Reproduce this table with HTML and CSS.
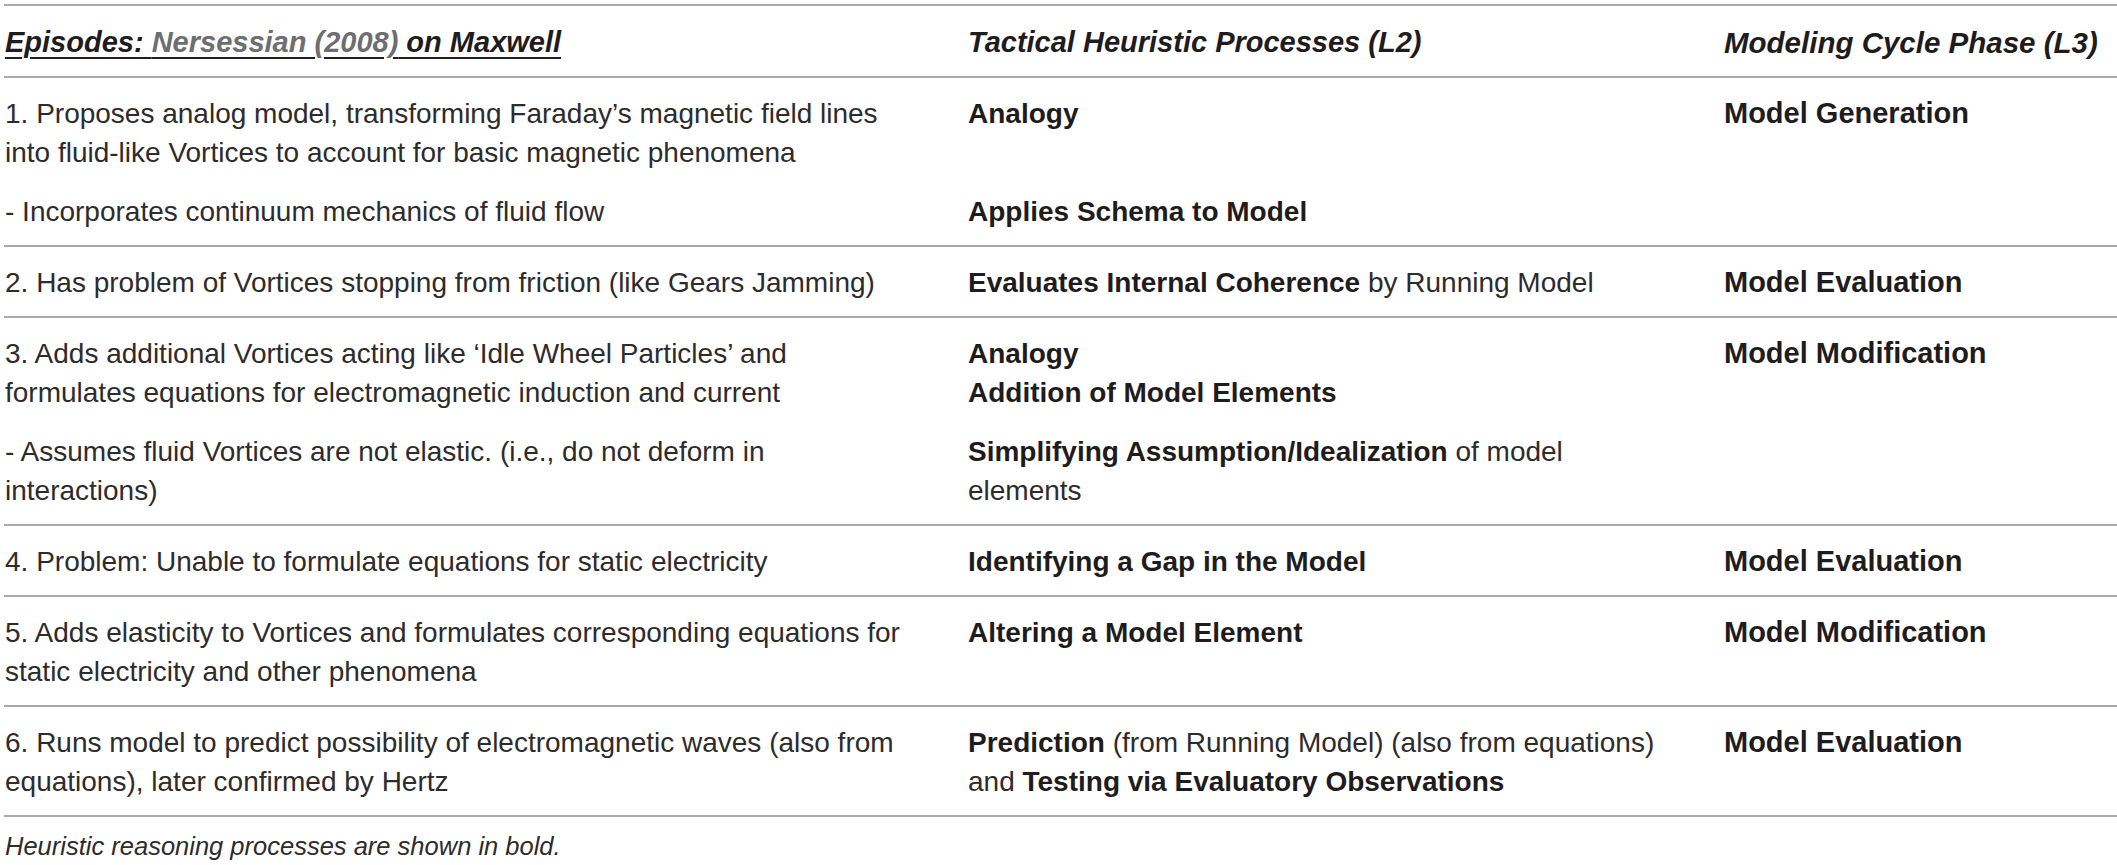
FILE: index.html
```html
<!DOCTYPE html>
<html lang="en">
<head>
<meta charset="utf-8">
<title>Episodes: Nersessian (2008) on Maxwell</title>
<link rel="stylesheet" href="styles.css">
</head>
<body>
<table class="tbl">
  <colgroup>
    <col class="c1">
    <col class="c2">
    <col class="c3">
  </colgroup>
  <thead>
    <tr class="head">
      <th class="h1"><span class="ul">Episodes: <span class="ref">Nersessian (2008)</span> on Maxwell</span></th>
      <th class="h2">Tactical Heuristic Processes (L2)</th>
      <th class="h3">Modeling Cycle Phase (L3)</th>
    </tr>
  </thead>
  <tbody>
    <tr class="open">
      <td>1. Proposes analog model, transforming Faraday’s magnetic field lines into fluid-like Vortices to account for basic magnetic phenomena</td>
      <td><b>Analogy</b></td>
      <td class="phase">Model Generation</td>
    </tr>
    <tr class="cont end">
      <td>- Incorporates continuum mechanics of fluid flow</td>
      <td><b>Applies Schema to Model</b></td>
      <td></td>
    </tr>
    <tr class="end">
      <td>2. Has problem of Vortices stopping from friction (like Gears Jamming)</td>
      <td><b>Evaluates Internal Coherence</b> by Running Model</td>
      <td class="phase">Model Evaluation</td>
    </tr>
    <tr class="open">
      <td>3. Adds additional Vortices acting like ‘Idle Wheel Particles’ and formulates equations for electromagnetic induction and current</td>
      <td><b>Analogy</b><br><b>Addition of Model Elements</b></td>
      <td class="phase">Model Modification</td>
    </tr>
    <tr class="cont end">
      <td>- Assumes fluid Vortices are not elastic. (i.e., do not deform in interactions)</td>
      <td><b>Simplifying Assumption/Idealization</b> of model elements</td>
      <td></td>
    </tr>
    <tr class="end">
      <td>4. Problem: Unable to formulate equations for static electricity</td>
      <td><b>Identifying a Gap in the Model</b></td>
      <td class="phase">Model Evaluation</td>
    </tr>
    <tr class="end">
      <td>5. Adds elasticity to Vortices and formulates corresponding equations for static electricity and other phenomena</td>
      <td><b>Altering a Model Element</b></td>
      <td class="phase">Model Modification</td>
    </tr>
    <tr class="end">
      <td>6. Runs model to predict possibility of electromagnetic waves (also from equations), later confirmed by Hertz</td>
      <td><b>Prediction</b> (from Running Model) (also from equations) and <b>Testing via Evaluatory Observations</b></td>
      <td class="phase">Model Evaluation</td>
    </tr>
  </tbody>
</table>
<p class="note">Heuristic reasoning processes are shown in bold.</p>
</body>
</html>
```

FILE: styles.css
```css
html, body {
  margin: 0;
  padding: 0;
  background: #ffffff;
}

body {
  font-family: "Liberation Sans", Arial, sans-serif;
  color: #2e2b2c;
  font-size: 28px;
  line-height: 39px;
}

.tbl {
  margin: 4px 0 0 4px;
  width: 2113px;
  border-collapse: collapse;
  table-layout: fixed;
  border-top: 2px solid #a7a9ac;
}

.c1 { width: 963px; }
.c2 { width: 756px; }
.c3 { width: auto; }

.tbl th,
.tbl td {
  text-align: left;
  vertical-align: top;
  padding: 16px 0 14px 1px;
  font-weight: 400;
}

.tbl td:nth-child(1) { padding-right: 56px; }
.tbl td:nth-child(2) { padding-right: 44px; }

.head th {
  border-bottom: 2px solid #a7a9ac;
  font-style: italic;
  font-weight: 700;
  font-size: 29px;
  color: #1f1c1d;
  padding-top: 17px;
}

.head th.h3 {
  font-size: 29.5px;
}

.ul {
  text-decoration: underline;
  text-decoration-color: #231f20;
  text-decoration-thickness: 2px;
  text-underline-offset: 5px;
}

.ref {
  color: #6d6e71;
}

.tbl b {
  font-weight: 700;
  color: #1f1c1d;
}

.tbl td.phase {
  font-weight: 700;
  font-size: 29px;
  color: #1f1c1d;
}

tr.open td {
  padding-bottom: 0;
}

tr.cont td {
  padding-top: 20px;
}

tr.end td {
  border-bottom: 2px solid #a7a9ac;
}

.note {
  margin: 10px 0 0 5px;
  font-style: italic;
  font-weight: 400;
  font-size: 25.5px;
}
```
